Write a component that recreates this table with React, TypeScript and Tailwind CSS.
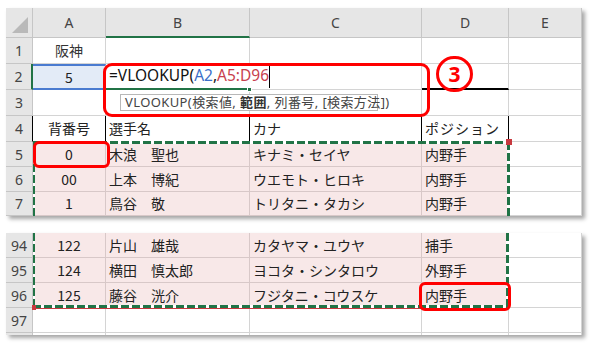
import React from "react";

type CellDef = {
  text?: React.ReactNode;
  align?: "left" | "center";
  className?: string;
};

const GRID = "grid grid-cols-[27px_73px_144px_172px_87px_73px]";
const JP = "font-['Noto_Sans_CJK_JP',sans-serif]";

function RowHead({ n, className = "" }: { n: number | string; className?: string }) {
  return (
    <div
      className={`flex items-center justify-center bg-[#e6e6e6] border-r border-b border-[#c6c6c6] text-[14px] text-[#444] font-['Noto_Sans',sans-serif] ${className}`}
    >
      {n}
    </div>
  );
}

function Cell({ text, align = "left", className = "" }: CellDef) {
  return (
    <div
      className={`flex items-center whitespace-nowrap overflow-hidden border-r border-b text-[14px] text-[#222] ${JP} ${
        align === "center" ? "justify-center" : "pl-[3px]"
      } ${className}`}
    >
      {text}
    </div>
  );
}

const plain = "bg-white border-[#d4d4d4]";
const pink = "bg-[#f8e8e8] border-[#d8c8c8]";

type Player = { no: string; name: string; kana: string; pos: string };

const topPlayers: Player[] = [
  { no: "0", name: "木浪　聖也", kana: "キナミ・セイヤ", pos: "内野手" },
  { no: "00", name: "上本　博紀", kana: "ウエモト・ヒロキ", pos: "内野手" },
  { no: "1", name: "鳥谷　敬", kana: "トリタニ・タカシ", pos: "内野手" },
];

const bottomPlayers: Player[] = [
  { no: "122", name: "片山　雄哉", kana: "カタヤマ・ユウヤ", pos: "捕手" },
  { no: "124", name: "横田　慎太郎", kana: "ヨコタ・シンタロウ", pos: "外野手" },
  { no: "125", name: "藤谷　洸介", kana: "フジタニ・コウスケ", pos: "内野手" },
];

function PlayerRow({ row, p, h }: { row: number; p: Player; h: string }) {
  return (
    <div className={`${GRID} ${h}`}>
      <RowHead n={row} />
      <Cell text={p.no} align="center" className={pink} />
      <Cell text={p.name} className={pink} />
      <Cell text={p.kana} className={pink} />
      <Cell text={p.pos} className={pink} />
      <Cell className={plain} />
    </div>
  );
}

function EmptyRow({ row, h }: { row: number | string; h: string }) {
  return (
    <div className={`${GRID} ${h}`}>
      <RowHead n={row} />
      <Cell className={plain} />
      <Cell className={plain} />
      <Cell className={plain} />
      <Cell className={plain} />
      <Cell className={plain} />
    </div>
  );
}

function ColHeader() {
  const head =
    "flex items-center justify-center bg-[#e6e6e6] border-r border-b border-[#c6c6c6] text-[14px] text-[#444] font-['Noto_Sans',sans-serif]";
  return (
    <div className={`${GRID} h-[30px]`}>
      <div className="relative bg-[#e6e6e6] border-r border-b border-[#c6c6c6]">
        <div className="absolute right-[4px] bottom-[4px] w-0 h-0 border-l-[16px] border-l-transparent border-b-[16px] border-b-[#b9b9b9]" />
      </div>
      <div className={head}>A</div>
      <div className={`${head} bg-[#dadada] text-[#1d5e3a] border-b-2 border-b-[#217346]`}>B</div>
      <div className={head}>C</div>
      <div className={head}>D</div>
      <div className={head}>E</div>
    </div>
  );
}

function Dashed({ className }: { className: string }) {
  return <div className={`absolute ${className}`} />;
}

const dashX = "bg-[repeating-linear-gradient(90deg,#217346_0_8px,#ffffff_8px_11px)]";
const dashY = "bg-[repeating-linear-gradient(180deg,#217346_0_8px,#ffffff_8px_11px)]";

export default function App() {
  return (
    <div className="relative w-[592px] h-[346px] bg-white overflow-hidden">
      <div className="flex flex-col gap-[17px] pt-[8px] pl-[6px]">
        {/* upper sheet block: rows 1-7 */}
        <div className="w-[576px] shadow-[3px_3px_4px_rgba(0,0,0,0.35)]">
          <ColHeader />
          <div className={`${GRID} h-[26px]`}>
            <RowHead n={1} />
            <Cell text="阪神" align="center" className={`${plain} text-[#333]`} />
            <Cell className={plain} />
            <Cell className={plain} />
            <Cell className={plain} />
            <Cell className={plain} />
          </div>
          <div className={`${GRID} h-[26px]`}>
            <RowHead n={2} className="bg-[#dadada] border-r-2 border-r-[#217346]" />
            <Cell
              text="5"
              align="center"
              className="bg-[#e3ebf7] border-t-2 border-b-2 border-[#4a7bd0] border-r-[#d4d4d4]"
            />
            <Cell className="bg-white border-[#d4d4d4] border-b-2 border-b-[#217346]" />
            <Cell className={plain} />
            <Cell className="bg-white border-[#d4d4d4] border-b-2 border-b-black" />
            <Cell className={plain} />
          </div>
          <EmptyRow row={3} h="h-[26px]" />
          <div className={`${GRID} h-[26px]`}>
            <RowHead n={4} className="border-r-black" />
            <Cell text="背番号" align="center" className="bg-white border-black" />
            <Cell text="選手名" className="bg-white border-black" />
            <Cell text="カナ" className="bg-white border-black" />
            <Cell text="ポジション" className="bg-white border-black tracking-[1px]" />
            <Cell className={plain} />
          </div>
          <PlayerRow row={5} p={topPlayers[0]} h="h-[25px]" />
          <PlayerRow row={6} p={topPlayers[1]} h="h-[25px]" />
          <PlayerRow row={7} p={topPlayers[2]} h="h-[24px]" />
        </div>

        {/* lower sheet block: rows 94-97 */}
        <div className="w-[576px] h-[102px] overflow-hidden shadow-[3px_3px_4px_rgba(0,0,0,0.35)]">
          <PlayerRow row={94} p={bottomPlayers[0]} h="h-[25px]" />
          <PlayerRow row={95} p={bottomPlayers[1]} h="h-[25px]" />
          <PlayerRow row={96} p={bottomPlayers[2]} h="h-[25px]" />
          <EmptyRow row={97} h="h-[25px]" />
          <EmptyRow row="" h="h-[25px]" />
        </div>
      </div>

      {/* in-cell formula editor on B2 */}
      <div className="absolute left-[106px] top-[64px] w-[164px] h-[24px] bg-white border-r border-black flex items-center pl-[3px] whitespace-nowrap text-[15.5px] text-[#111] font-['Noto_Sans',sans-serif]">
        =VLOOKUP(<span className="text-[#3b6fc9]">A2</span>,<span className="text-[#c8404e]">A5:D96</span>
      </div>
      <div className="absolute left-[247px] top-[87px] w-[5px] h-[5px] bg-[#217346] border border-white" />

      {/* function hint */}
      <div className="absolute left-[120px] top-[94px] w-[258px] h-[17px] bg-white border border-[#b8b8b8] flex items-center pl-[4px] whitespace-pre tracking-[0.4px] text-[13px] text-[#444] font-['Noto_Sans','Noto_Sans_CJK_JP',sans-serif]">
        {"VLOOKUP(検索値, "}
        <b className="font-bold text-[#333]">範囲</b>
        {", 列番号, [検索方法])"}
      </div>

      {/* copy marquee around A5:D96 */}
      <Dashed className={`left-[33px] top-[141px] w-[476px] h-[3px] ${dashX}`} />
      <Dashed className={`left-[33px] top-[142px] w-[2px] h-[74px] ${dashY}`} />
      <Dashed className={`left-[507px] top-[142px] w-[3px] h-[74px] ${dashY}`} />
      <div className="absolute left-[506px] top-[139px] w-[6px] h-[6px] bg-[#c8393f]" />

      <Dashed className={`left-[33px] top-[233px] w-[2px] h-[75px] ${dashY}`} />
      <Dashed className={`left-[506px] top-[233px] w-[3px] h-[75px] ${dashY}`} />
      <Dashed className={`left-[33px] top-[305px] w-[476px] h-[3px] ${dashX}`} />
      <div className="absolute left-[33px] top-[308px] w-[476px] h-[1px] bg-[#c8393f]" />
      <div className="absolute left-[32px] top-[305px] w-[4px] h-[5px] bg-[#c8393f]" />

      {/* red callouts */}
      <div className="absolute left-[103px] top-[63px] w-[327px] h-[54px] border-[3px] border-[#ff0000] rounded-[9px]" />
      <div className="absolute left-[436px] top-[56px] w-[37px] h-[36px] rounded-full border-[3px] border-[#ff0000] flex items-center justify-center text-[21px] font-bold text-[#ff0000] font-['Noto_Sans',sans-serif] leading-none">
        3
      </div>
      <div className="absolute left-[33px] top-[141px] w-[77px] h-[27px] border-[3px] border-[#ff0000] rounded-[6px]" />
      <div className="absolute left-[419px] top-[282px] w-[92px] h-[29px] border-[3px] border-[#ff0000] rounded-[6px]" />
    </div>
  );
}
